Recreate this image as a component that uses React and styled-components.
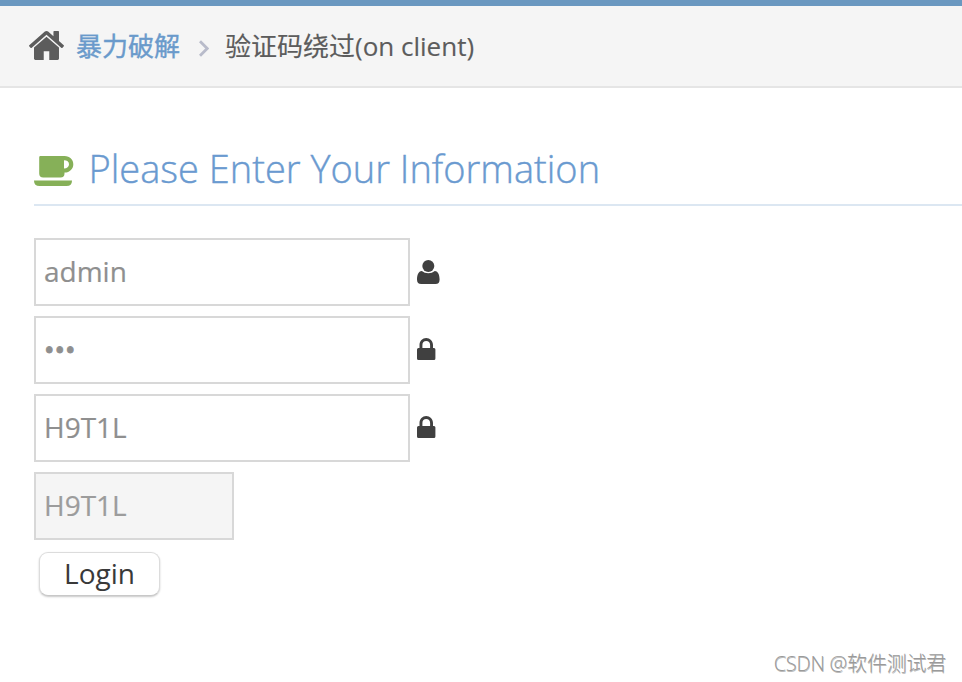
import React from "react";
import styled, { createGlobalStyle } from "styled-components";

const GlobalStyle = createGlobalStyle`
  * {
    box-sizing: border-box;
  }
  body {
    margin: 0;
    background-color: #fff;
    font-family: "Open Sans", "Noto Sans CJK SC", sans-serif;
    color: #393939;
  }
`;

const Container = styled.div`
  height: 682px;
  display: flex;
  flex-direction: column;
  overflow: hidden;
`;

const Breadcrumbs = styled.nav`
  height: 88px;
  padding: 0 29px 1px;
  display: flex;
  align-items: center;
  background-color: #f5f5f5;
  border-top: 6px solid #6a98c0;
  border-bottom: 2px solid #e5e5e5;
  font-size: 26px;
  line-height: 36px;
  white-space: nowrap;
  -webkit-text-stroke: 0.15px currentColor;
`;

const Icon = styled.svg`
  display: block;
  flex: none;
  width: ${(props) => props.$w}px;
  height: ${(props) => props.$h}px;
  fill: ${(props) => props.$color || "#404040"};
`;

const CrumbLink = styled.a`
  margin-left: 12px;
  color: #6a9acb;
  -webkit-text-stroke: 0.4px currentColor;
`;

const Chevron = styled.svg`
  width: 10px;
  height: 17px;
  margin: 5px 16px 0 19px;
  fill: none;
  stroke: #b8bbca;
  stroke-width: 2.8;
`;

const Crumb = styled.span`
  color: #5c5c5c;
`;

const Content = styled.main`
  flex: 1;
  padding: 55px 0 0 34px;
  display: flex;
  flex-direction: column;
`;

const Title = styled.h4`
  height: 63px;
  margin: 0 0 32px;
  padding-bottom: 11px;
  display: flex;
  align-items: center;
  gap: 14.5px;
  border-bottom: 2px solid #dce7f2;
  color: #6a9ad0;
  font-size: 38px;
  font-weight: 300;
  line-height: 52px;
  white-space: nowrap;
  -webkit-text-stroke: 0.4px currentColor;

  svg {
    margin-top: 7px;
  }
`;

const Form = styled.form`
  display: flex;
  flex-direction: column;
  align-items: flex-start;
  gap: 10px;
`;

const Field = styled.label`
  display: flex;
  align-items: center;
  gap: 7px;
`;

const Input = styled.input`
  width: ${(props) => props.$w || 376}px;
  height: 68px;
  padding: 0 8px 2px;
  border: 2px solid #d8d8d8;
  border-radius: 0;
  outline: none;
  background-color: ${(props) => (props.readOnly ? "#f5f5f5" : "#fff")};
  color: ${(props) => (props.readOnly ? "#9c9c9c" : "#8f8f8f")};
  font-family: inherit;
  font-size: 28px;
  -webkit-text-stroke: 0.2px currentColor;
`;

const PasswordInput = styled(Input)`
  -webkit-text-stroke: 0.9px currentColor;
`;

const Button = styled.button`
  width: 121px;
  height: 44px;
  margin: 2px 0 0 5px;
  padding: 0 0 3px;
  border: 1px solid #dcdcdc;
  border-bottom-color: #c8c8c8;
  border-radius: 9px;
  background-color: #fff;
  box-shadow: 0 1px 2px rgba(0, 0, 0, 0.22);
  color: #393939;
  font-family: inherit;
  font-size: 28px;
  line-height: 38px;
`;

const Watermark = styled.footer`
  margin: auto 16px 3px 0;
  align-self: flex-end;
  color: #9a9a9a;
  font-size: 20px;
  font-weight: 300;
  line-height: 30px;
  letter-spacing: -0.22px;
  white-space: nowrap;
  text-shadow: 0.5px 0.5px 0 #bbb;
`;

const HomeIcon = () => (
  <Icon $w={35} $h={29} $color="#5c5c5c" viewBox="89 253 1614 1283" preserveAspectRatio="none">
    <path d="M1472 992v480q0 26-19 45t-45 19h-384v-384h-256v384h-384q-26 0-45-19t-19-45v-480q0-1 .5-3t.5-3l575-474 575 474q1 2 1 6zm223-69l-62 74q-8 9-21 11h-3q-13 0-21-7l-692-577-692 577q-12 8-24 7-13-2-21-11l-62-74q-8-10-7-23.5t11-21.5l719-599q32-26 76-26t76 26l244 204v-195q0-14 9-23t23-9h192q14 0 23 9t9 23v408l219 182q10 8 11 21.5t-7 23.5z" />
  </Icon>
);

const CoffeeIcon = () => (
  <Icon $w={40} $h={31} $color="#86b058" viewBox="0 0 40 31">
    <path
      fillRule="evenodd"
      d="M6.500 0H30.500C36 0 39.300 3.700 39.300 8.200S36 16.500 30.500 16.500V17.500Q30.500 21.500 26.500 21.500H9.200Q5.200 21.500 5.200 17.500V1.300Q5.200 0 6.500 0ZM30 4.200V12.500C33 12.500 35 11 35 8.300S33 4.200 30 4.200Z"
    />
    <path d="M0 24.500H38Q38 30 32.500 30H5.500Q0 30 0 24.500Z" />
  </Icon>
);

const UserIcon = () => (
  <Icon $w={23} $h={24} viewBox="0 0 23 24">
    <circle cx="11.300" cy="6" r="6" />
    <path d="M4.800 11Q7.500 13.300 11.300 13.300T17.800 11C21.300 11 22.600 15.500 22.600 19.500Q22.600 24 18.500 24H4.200Q0 24 0 19.500C0 15.500 1.300 11 4.800 11Z" />
  </Icon>
);

const LockSvg = styled(Icon)`
  margin-bottom: 2px;
`;

const LockIcon = () => (
  <LockSvg $w={19} $h={22} viewBox="0 0 19 22">
    <path
      fillRule="evenodd"
      d="M2.500 10V7C2.500 3 5.500 0 9.200 0S16 3 16 7V10H17Q18.400 10 18.400 11.500V20.500Q18.400 22 17 22H1.500Q0 22 0 20.500V11.500Q0 10 1.500 10ZM5.400 10H13.100V7C13.100 4.600 11.500 3 9.200 3S5.400 4.600 5.400 7Z"
    />
  </LockSvg>
);

const App = () => {
  return (
    <Container>
      <GlobalStyle />
      <Breadcrumbs>
        <HomeIcon />
        <CrumbLink>暴力破解</CrumbLink>
        <Chevron viewBox="0 0 10 17">
          <path d="M1 1.200L8.200 8.500L1 15.800" />
        </Chevron>
        <Crumb>验证码绕过(on client)</Crumb>
      </Breadcrumbs>
      <Content>
        <Title>
          <CoffeeIcon />
          Please Enter Your Information
        </Title>
        <Form>
          <Field>
            <Input type="text" defaultValue="admin" />
            <UserIcon />
          </Field>
          <Field>
            <PasswordInput type="password" defaultValue="123" />
            <LockIcon />
          </Field>
          <Field>
            <Input type="text" defaultValue="H9T1L" />
            <LockIcon />
          </Field>
          <Input type="text" value="H9T1L" readOnly $w={200} />
          <Button type="button">Login</Button>
        </Form>
        <Watermark>CSDN @软件测试君</Watermark>
      </Content>
    </Container>
  );
};

export default App;
